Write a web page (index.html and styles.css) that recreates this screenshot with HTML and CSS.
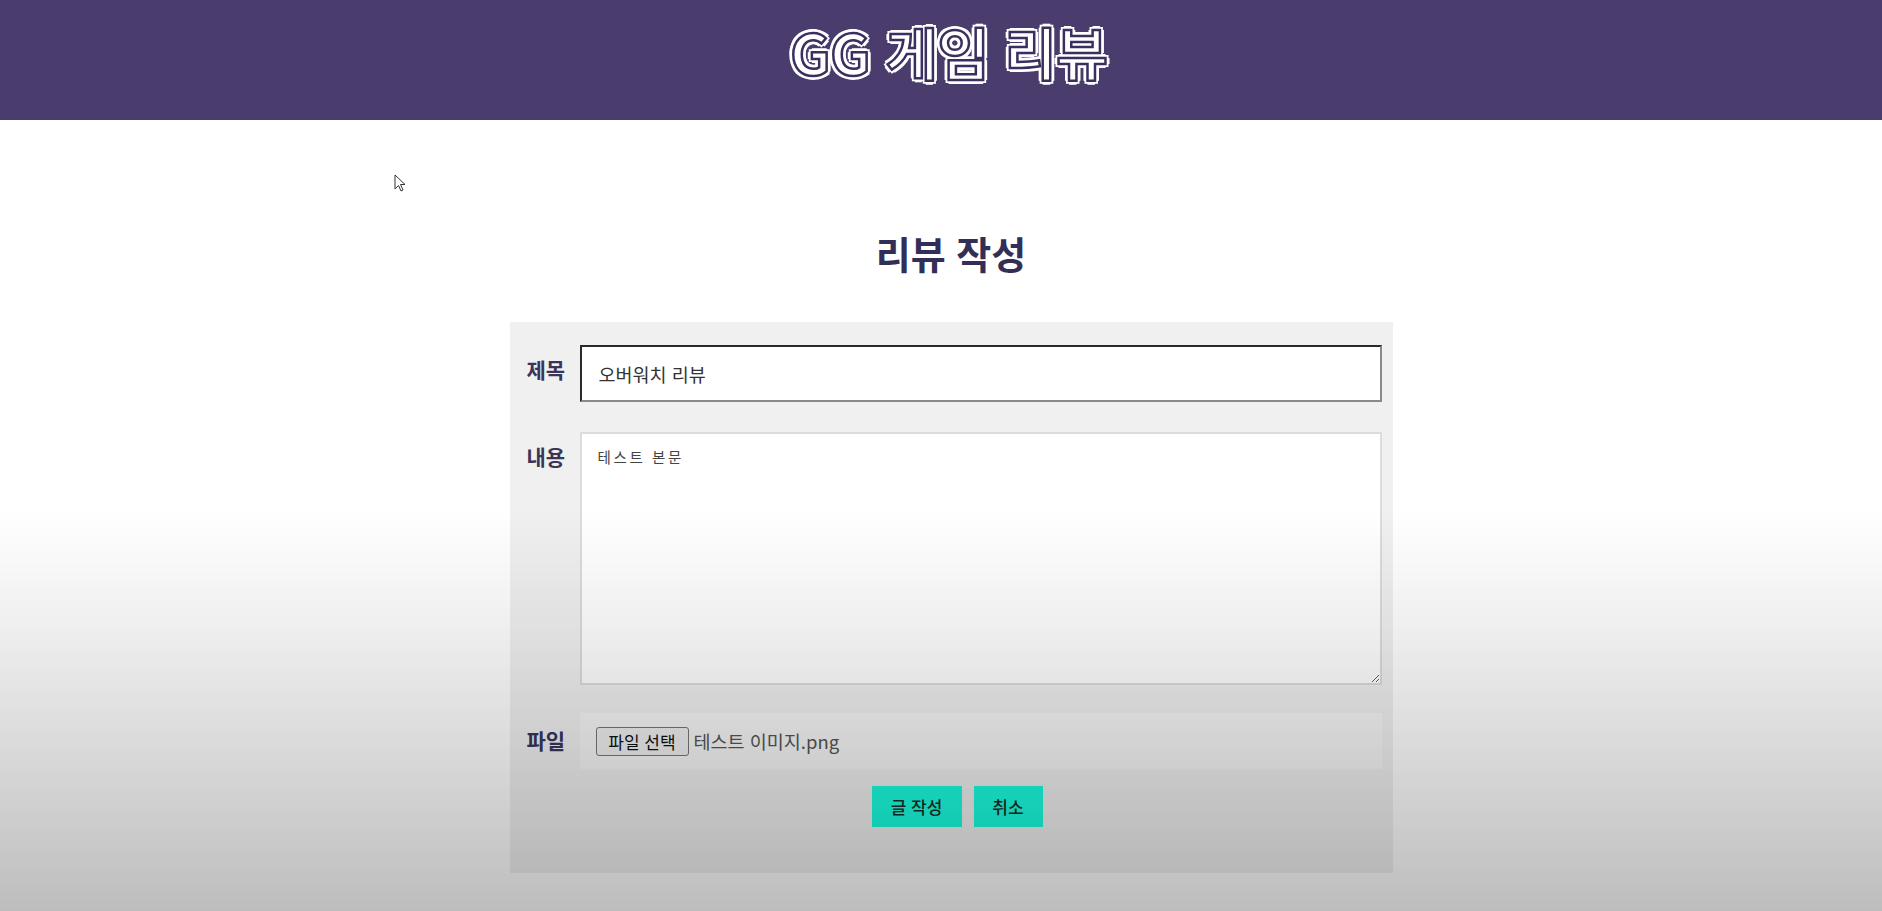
FILE: index.html
```html
<!DOCTYPE html>
<html lang="ko">
<head>
<meta charset="utf-8">
<title>GG 게임 리뷰</title>
<link rel="stylesheet" href="styles.css">
</head>
<body>
<header class="site-header">
  <h1 class="site-title">GG 게임 리뷰</h1>
</header>
<main class="main">
  <h2 class="page-title">리뷰 작성</h2>
  <form class="review-form">
    <div class="row">
      <label class="label">제목</label>
      <input class="text-input" type="text" value="오버워치 리뷰">
    </div>
    <div class="row row-content">
      <label class="label">내용</label>
      <textarea class="textarea">테스트 본문</textarea>
    </div>
    <div class="row row-file">
      <label class="label">파일</label>
      <div class="file-box">
        <span class="file-btn">파일 선택</span>
        <span class="file-name">테스트 이미지.png</span>
      </div>
    </div>
    <div class="actions">
      <button type="button" class="btn btn-submit">글 작성</button>
      <button type="button" class="btn btn-cancel">취소</button>
    </div>
  </form>
</main>
<svg class="cursor" width="12" height="20" viewBox="0 0 12 20"><path d="M1 1 L1 15 L4.5 11.5 L7 17 L9 16 L6.5 10.5 L11 10.5 Z" fill="#fff" stroke="#333" stroke-width="1"/></svg>
<div class="fade"></div>
</body>
</html>
```
FILE: styles.css
```css
html, body {
  margin: 0;
  padding: 0;
}
body {
  background: #ffffff;
  font-family: "Noto Sans CJK KR", "Noto Sans", sans-serif;
  height: 911px;
  overflow: hidden;
}
.site-header {
  height: 120px;
  background: #4a3d6e;
  display: flex;
  align-items: center;
  justify-content: center;
  padding-left: 16px;
  box-sizing: border-box;
}
.site-title {
  margin: 0;
  margin-top: -20px;
  font-size: 56px;
  font-weight: 700;
  color: #ffffff;
  letter-spacing: 0;
  -webkit-text-stroke: 2.5px #3a2f5e;
  text-shadow:
    3px 0 0 #fff, -3px 0 0 #fff, 0 3px 0 #fff, 0 -3px 0 #fff,
    2px 2px 0 #fff, -2px 2px 0 #fff, 2px -2px 0 #fff, -2px -2px 0 #fff,
    4px 0 0 #fff, -4px 0 0 #fff, 0 4px 0 #fff, 0 -4px 0 #fff,
    3px 3px 0 #fff, -3px 3px 0 #fff, 3px -3px 0 #fff, -3px -3px 0 #fff;
}
.main {
  display: flex;
  flex-direction: column;
  align-items: center;
  padding-left: 20px;
}
.page-title {
  margin: 106px 0 42px;
  font-size: 38px;
  line-height: 54px;
  font-weight: 700;
  color: #332e58;
}
.review-form {
  width: 883px;
  box-sizing: border-box;
  background: #f0f0f0;
  padding: 23px 11px 46px 17px;
  display: flex;
  flex-direction: column;
}
.row {
  display: flex;
  align-items: flex-start;
}
.row-content {
  margin-top: 30px;
}
.row-file {
  margin-top: 28px;
}
.label {
  width: 53px;
  flex: none;
  font-size: 21px;
  line-height: 30px;
  font-weight: 700;
  color: #3a3559;
  padding-top: 9px;
}
.row-file .label {
  padding-top: 12px;
}
.text-input {
  flex: 1;
  height: 57px;
  box-sizing: border-box;
  border-style: solid;
  border-width: 2px;
  border-color: #2a2a2a #8a8a8a #8a8a8a #2a2a2a;
  background: #fff;
  padding: 0 17px;
  font-family: "Noto Sans CJK KR", sans-serif;
  font-size: 18.5px;
  color: #333;
  outline: none;
}
.textarea {
  flex: 1;
  height: 253px;
  box-sizing: border-box;
  border: 2px solid #dcdcdc;
  background: #fff;
  padding: 12px 16px;
  font-family: "Noto Sans CJK KR", sans-serif;
  font-size: 14.5px;
  letter-spacing: 2.6px;
  color: #444;
  resize: vertical;
  outline: none;
}
.file-box {
  flex: 1;
  height: 56px;
  background: #f6f6f6;
  display: flex;
  align-items: center;
  padding-left: 16px;
  gap: 5px;
}
.file-btn {
  display: inline-flex;
  align-items: center;
  justify-content: center;
  width: 93px;
  height: 29px;
  box-sizing: border-box;
  background: #efefef;
  border: 1px solid #767676;
  border-radius: 3px;
  font-size: 17px;
  color: #111;
}
.file-name {
  font-size: 18.5px;
  color: #555;
  font-family: "Noto Sans CJK KR", sans-serif;
}
.actions {
  display: flex;
  justify-content: center;
  gap: 12px;
  margin-top: 17px;
  padding-left: 6px;
}
.btn {
  height: 41px;
  border: none;
  background: #1afedf;
  color: #1a2e2a;
  font-family: "Noto Sans CJK KR", sans-serif;
  font-size: 17px;
  font-weight: 500;
  padding: 0;
}
.btn-submit {
  width: 90px;
}
.btn-cancel {
  width: 69px;
}
.cursor {
  position: absolute;
  left: 394px;
  top: 174px;
}
.fade {
  position: fixed;
  left: 0;
  top: 0;
  width: 100%;
  height: 100%;
  pointer-events: none;
  background: linear-gradient(to bottom, rgba(0,0,0,0) 0, rgba(0,0,0,0) 510px, rgba(0,0,0,0.06) 620px, rgba(0,0,0,0.17) 780px, rgba(0,0,0,0.26) 911px);
}
```
